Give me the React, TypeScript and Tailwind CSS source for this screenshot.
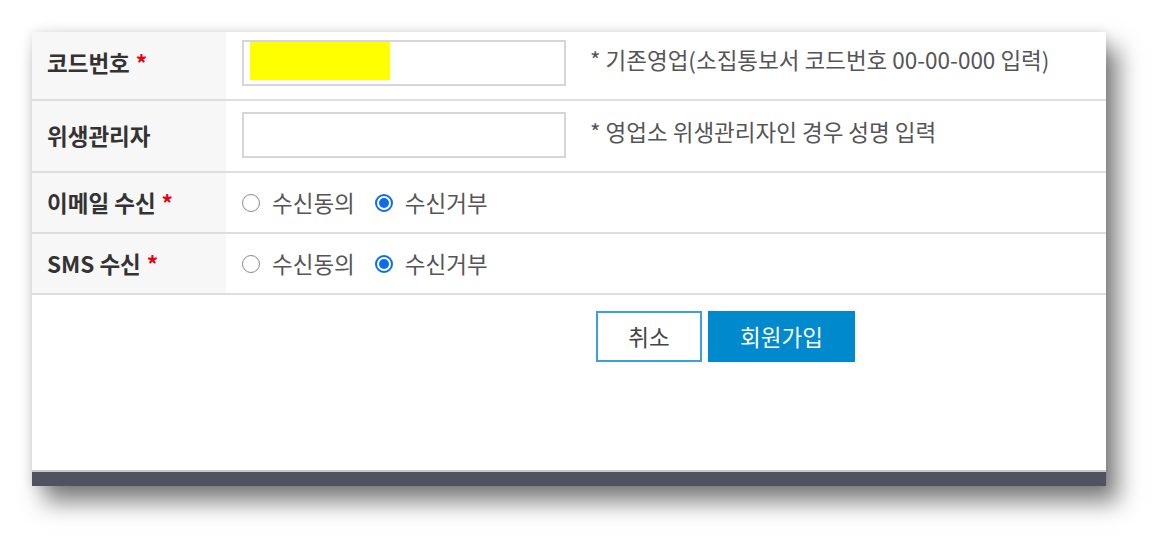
import React, { useState } from "react";

const font = { fontFamily: '"Noto Sans CJK KR", "Noto Sans", sans-serif' };

function Star() {
  return <span className="ml-[6px] text-[#e60012]">*</span>;
}

function Radio({ checked, label, onClick }: { checked: boolean; label: string; onClick: () => void }) {
  return (
    <button type="button" onClick={onClick} className="flex items-center">
      {checked ? (
        <span className="flex h-[18px] w-[18px] items-center justify-center rounded-full border-2 border-[#0b6cf0]">
          <span className="h-[10px] w-[10px] rounded-full bg-[#0b6cf0]" />
        </span>
      ) : (
        <span className="h-[18px] w-[18px] rounded-full border-[1.5px] border-[#8a8a8a]" />
      )}
      <span className="ml-3 text-[22.5px] leading-none text-[#555]">{label}</span>
    </button>
  );
}

function RadioRow({ title }: { title: string }) {
  const [agree, setAgree] = useState(false);
  return (
    <div className="flex h-[61px] border-b-2 border-[#dedede]">
      <div className="flex w-[194px] items-center bg-[#f7f7f7] pl-[15px] text-[22.5px] font-bold text-[#333]">
        {title}
        <Star />
      </div>
      <div className="flex items-center gap-5 pl-4">
        <Radio checked={agree} label="수신동의" onClick={() => setAgree(true)} />
        <Radio checked={!agree} label="수신거부" onClick={() => setAgree(false)} />
      </div>
    </div>
  );
}

export default function App() {
  return (
    <div className="h-[551px] w-[1171px] bg-white pl-8 pt-8" style={font}>
      <div className="flex h-[454px] w-[1074px] flex-col bg-white shadow-[0_0_10px_rgba(0,0,0,0.12),12px_16px_22px_rgba(0,0,0,0.5)]">
        <div className="flex h-[69px] border-b-2 border-[#dedede]">
          <div className="flex w-[194px] items-center bg-[#f7f7f7] pb-[6px] pl-[15px] text-[22.5px] font-bold text-[#333]">
            코드번호
            <Star />
          </div>
          <div className="flex items-start pl-4 pt-2">
            <div className="relative h-[46px] w-[324px] border-2 border-[#d6d6d6] bg-white">
              <div className="absolute left-[6px] top-0 h-[38px] w-[140px] bg-[#ffff00]" />
            </div>
            <p className="ml-6 mt-[4px] text-[22.5px] leading-[30px] text-[#555]">
              * 기존영업(소집통보서 코드번호 00-00-000 입력)
            </p>
          </div>
        </div>

        <div className="flex h-[72px] border-b-2 border-[#dedede]">
          <div className="flex w-[194px] items-center bg-[#f7f7f7] pl-[15px] text-[22.5px] font-bold text-[#333]">
            위생관리자
          </div>
          <div className="flex items-start pl-4 pt-[11px]">
            <input className="h-[46px] w-[324px] border-2 border-[#d6d6d6] bg-white px-2 text-[18px] outline-none" />
            <p className="ml-6 mt-[4px] text-[22.5px] leading-[30px] text-[#555]">
              * 영업소 위생관리자인 경우 성명 입력
            </p>
          </div>
        </div>

        <RadioRow title="이메일 수신" />
        <RadioRow title="SMS 수신" />

        <div className="ml-[564px] mt-4 flex gap-[6px]">
          <button className="h-[51px] w-[106px] border-2 border-[#3aa0e0] bg-white text-[22.5px] text-[#444]">
            취소
          </button>
          <button className="h-[51px] w-[147px] bg-[#0089cd] text-[22.5px] text-white">회원가입</button>
        </div>

        <div className="flex-1" />
        <div className="h-[16px] border-t-2 border-[#c9c9cd] bg-[#50525f]" />
      </div>
    </div>
  );
}
